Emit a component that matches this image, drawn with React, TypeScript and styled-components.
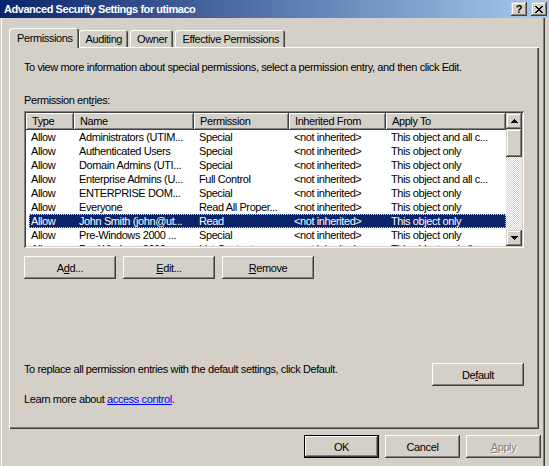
import React from "react";
import styled, { createGlobalStyle, css } from "styled-components";

const face = "#d4d0c8";
const shadow = "#808080";
const darkShadow = "#404040";
const navy = "#0a246a";

const GlobalStyle = createGlobalStyle`
  html, body {
    margin: 0;
    padding: 0;
    background: ${face};
  }
  body {
    font-family: "Liberation Sans", Arial, sans-serif;
    font-size: 11px;
    letter-spacing: -0.4px;
    color: #000;
  }
`;

// push buttons and header items: white outer highlight
const raised = css`
  box-shadow: inset -1px -1px ${darkShadow}, inset 1px 1px #fff,
    inset -2px -2px ${shadow}, inset 2px 2px ${face};
`;

// scrollbar / caption buttons: face outer, white inner
const raisedOuter = css`
  box-shadow: inset -1px -1px ${darkShadow}, inset 1px 1px ${face},
    inset -2px -2px ${shadow}, inset 2px 2px #fff;
`;

const Window = styled.div`
  width: 549px;
  height: 466px;
  overflow: hidden;
  background: ${face};
  display: flex;
  flex-direction: column;
`;

const TitleBar = styled.div`
  flex: none;
  height: 18px;
  display: flex;
  align-items: center;
  padding: 0 2px 0 4px;
  background: linear-gradient(to right, ${navy}, #a6caf0);
  color: #fff;
  font-weight: bold;
`;

const TitleText = styled.span`
  flex: 1;
  white-space: nowrap;
  letter-spacing: -0.45px;
`;

const CaptionButton = styled.div<{ $gap: number }>`
  width: 16px;
  height: 14px;
  margin-left: ${(p) => p.$gap}px;
  background: ${face};
  ${raisedOuter};
  display: flex;
  align-items: center;
  justify-content: center;
  color: #000;
  font-weight: bold;
  font-size: 11px;
  line-height: 14px;
  letter-spacing: 0;
`;

const Body = styled.div`
  flex: 1;
  display: flex;
  flex-direction: column;
  padding: 10px 0 0 9px;
  box-shadow: inset 1px 0 ${face}, inset 2px 0 #fff, inset -4px 0 ${face},
    inset -5px 0 ${darkShadow}, inset -6px 0 ${shadow};
`;

const TabStrip = styled.div`
  display: flex;
  align-items: flex-end;
  height: 19px;
  padding-left: 2px;
  position: relative;
  z-index: 1;
`;

const Tab = styled.div<{ $active?: boolean }>`
  box-sizing: border-box;
  height: ${(p) => (p.$active ? 20 : 17)}px;
  margin: ${(p) => (p.$active ? "0 0 -1px -2px" : "0 2px 0 0")};
  padding: ${(p) => (p.$active ? "4px 6px 0 8px" : "3px 6px 0 7px")};
  line-height: 13px;
  white-space: nowrap;
  background: ${face};
  border-radius: 3px 3px 0 0;
  box-shadow: inset 1px 1px #fff, inset -1px 0 ${darkShadow},
    inset -2px 0 ${shadow};
`;

const Panel = styled.div`
  box-sizing: border-box;
  width: 530px;
  height: 382px;
  padding: 14px 15px 0 15px;
  display: flex;
  flex-direction: column;
  box-shadow: inset 1px 1px #fff, inset -1px -1px ${darkShadow},
    inset -2px -2px ${shadow};
`;

const Text = styled.div<{ $top?: number }>`
  margin-top: ${(p) => p.$top ?? 0}px;
  line-height: 13px;
  white-space: nowrap;
`;

const Link = styled.span`
  color: #0000ff;
  text-decoration: underline;
`;

const Key = styled.span`
  text-decoration: underline;
`;

const ListBox = styled.div`
  box-sizing: border-box;
  margin-top: 4px;
  width: 500px;
  height: 137px;
  padding: 2px;
  display: flex;
  box-shadow: inset 1px 1px ${shadow}, inset -1px -1px #fff,
    inset 2px 2px ${darkShadow}, inset -2px -2px ${face};
`;

const ListArea = styled.div`
  flex: 1;
  background: #fff;
  overflow: hidden;
  display: flex;
  flex-direction: column;
`;

const HeaderRow = styled.div`
  flex: none;
  display: grid;
  grid-template-columns: 48px 120px 95px 97px 120px;
  height: 17px;
`;

const HeaderCell = styled.div`
  background: ${face};
  ${raised};
  padding-left: 6px;
  line-height: 17px;
  white-space: nowrap;
  overflow: hidden;
`;

const Row = styled.div<{ $selected?: boolean }>`
  flex: none;
  display: grid;
  grid-template-columns: 45px 120px 95px 97px 120px;
  height: 14px;
  margin-left: 3px;
  line-height: 14px;
  background: ${(p) => (p.$selected ? navy : "transparent")};
  color: ${(p) => (p.$selected ? "#fff" : "#000")};
  outline: ${(p) => (p.$selected ? `1px dotted ${face}` : "none")};
  outline-offset: -1px;
`;

const Cell = styled.div<{ $first?: boolean }>`
  padding-left: ${(p) => (p.$first ? 2 : 5)}px;
  white-space: nowrap;
  overflow: hidden;
`;

const ScrollBar = styled.div`
  flex: none;
  width: 16px;
  display: flex;
  flex-direction: column;
`;

const ScrollButton = styled.div<{ $h: number }>`
  flex: none;
  height: ${(p) => p.$h}px;
  background: ${face};
  ${raisedOuter};
  display: flex;
  align-items: center;
  justify-content: center;
`;

const Track = styled.div`
  flex: 1;
  background-color: ${face};
  background-image: conic-gradient(
    #fff 25%,
    ${face} 0 50%,
    #fff 0 75%,
    ${face} 0
  );
  background-size: 2px 2px;
`;

const ButtonRow = styled.div<{ $top: number; $gap: number }>`
  display: flex;
  gap: ${(p) => p.$gap}px;
  margin-top: ${(p) => p.$top}px;
`;

const DefaultRow = styled.div`
  display: flex;
  justify-content: space-between;
  align-items: flex-start;
  margin-top: 84px;
`;

const Footer = styled.div`
  display: flex;
  justify-content: flex-end;
  gap: 6px;
  margin-top: 6px;
  padding-right: 8px;
`;

const PushButton = styled.button<{ $w: number; $default?: boolean }>`
  width: ${(p) => p.$w}px;
  height: 23px;
  padding: 0;
  border: none;
  background: ${face};
  font: inherit;
  letter-spacing: inherit;
  color: #000;
  ${(p) =>
    p.$default
      ? css`
          box-shadow: inset 0 0 0 1px #000, inset -2px -2px ${darkShadow},
            inset 2px 2px #fff, inset -3px -3px ${shadow};
        `
      : raised};
  &:disabled {
    color: ${shadow};
    text-shadow: 1px 1px #fff;
  }
`;

const Arrow = ({ down }: { down?: boolean }) => (
  <svg width="7" height="4" viewBox="0 0 7 4" shapeRendering="crispEdges">
    <polygon points={down ? "0,0 7,0 3.5,4" : "3.5,0 7,4 0,4"} fill="#000" />
  </svg>
);

const CloseGlyph = () => (
  <svg width="8" height="7" viewBox="0 0 8 7" shapeRendering="crispEdges">
    <path
      d="M0 0h2v1h1v1h2V1h1V0h2v1H7v1H6v1H5v1h1v1h1v1h1v1H6V6H5V5H3v1H2v1H0V6h1V5h1V4h1V3H2V2H1V1H0z"
      fill="#000"
    />
  </svg>
);

type Entry = {
  type: string;
  name: string;
  permission: string;
  inherited: string;
  applyTo: string;
  selected?: boolean;
};

const entries: Entry[] = [
  { type: "Allow", name: "Administrators (UTIM...", permission: "Special", inherited: "<not inherited>", applyTo: "This object and all c..." },
  { type: "Allow", name: "Authenticated Users", permission: "Special", inherited: "<not inherited>", applyTo: "This object only" },
  { type: "Allow", name: "Domain Admins (UTI...", permission: "Special", inherited: "<not inherited>", applyTo: "This object only" },
  { type: "Allow", name: "Enterprise Admins (U...", permission: "Full Control", inherited: "<not inherited>", applyTo: "This object and all c..." },
  { type: "Allow", name: "ENTERPRISE DOM...", permission: "Special", inherited: "<not inherited>", applyTo: "This object only" },
  { type: "Allow", name: "Everyone", permission: "Read All Proper...", inherited: "<not inherited>", applyTo: "This object only" },
  { type: "Allow", name: "John Smith (john@ut...", permission: "Read", inherited: "<not inherited>", applyTo: "This object only", selected: true },
  { type: "Allow", name: "Pre-Windows 2000 ...", permission: "Special", inherited: "<not inherited>", applyTo: "This object only" },
  { type: "Allow", name: "Pre-Windows 2000 ...", permission: "List Contents", inherited: "<not inherited>", applyTo: "This object and all c..." },
];

const tabs = ["Permissions", "Auditing", "Owner", "Effective Permissions"];
const columns = ["Type", "Name", "Permission", "Inherited From", "Apply To"];

const App = () => {
  return (
    <>
      <GlobalStyle />
      <Window>
        <TitleBar>
          <TitleText>Advanced Security Settings for utimaco</TitleText>
          <CaptionButton $gap={0}>?</CaptionButton>
          <CaptionButton $gap={4}>
            <CloseGlyph />
          </CaptionButton>
        </TitleBar>
        <Body>
          <TabStrip>
            {tabs.map((t, i) => (
              <Tab key={t} $active={i === 0}>
                {t}
              </Tab>
            ))}
          </TabStrip>
          <Panel>
            <Text>
              To view more information about special permissions, select a
              permission entry, and then click Edit.
            </Text>
            <Text $top={20}>
              Permission ent<Key>r</Key>ies:
            </Text>
            <ListBox>
              <ListArea>
                <HeaderRow>
                  {columns.map((c) => (
                    <HeaderCell key={c}>{c}</HeaderCell>
                  ))}
                </HeaderRow>
                {entries.map((e, i) => (
                  <Row key={i} $selected={e.selected}>
                    <Cell $first>{e.type}</Cell>
                    <Cell>{e.name}</Cell>
                    <Cell>{e.permission}</Cell>
                    <Cell>{e.inherited}</Cell>
                    <Cell>{e.applyTo}</Cell>
                  </Row>
                ))}
              </ListArea>
              <ScrollBar>
                <ScrollButton $h={16}>
                  <Arrow />
                </ScrollButton>
                <ScrollButton $h={28} />
                <Track />
                <ScrollButton $h={16}>
                  <Arrow down />
                </ScrollButton>
              </ScrollBar>
            </ListBox>
            <ButtonRow $top={8} $gap={7}>
              <PushButton $w={92}>
                A<Key>d</Key>d...
              </PushButton>
              <PushButton $w={92}>
                <Key>E</Key>dit...
              </PushButton>
              <PushButton $w={92}>
                <Key>R</Key>emove
              </PushButton>
            </ButtonRow>
            <DefaultRow>
              <Text>
                To replace all permission entries with the default settings,
                click Default.
              </Text>
              <PushButton $w={92}>
                De<Key>f</Key>ault
              </PushButton>
            </DefaultRow>
            <Text $top={7}>
              Learn more about <Link>access control</Link>.
            </Text>
          </Panel>
          <Footer>
            <PushButton $w={75} $default>
              OK
            </PushButton>
            <PushButton $w={75}>Cancel</PushButton>
            <PushButton $w={75} disabled>
              <Key>A</Key>pply
            </PushButton>
          </Footer>
        </Body>
      </Window>
    </>
  );
};

export default App;
